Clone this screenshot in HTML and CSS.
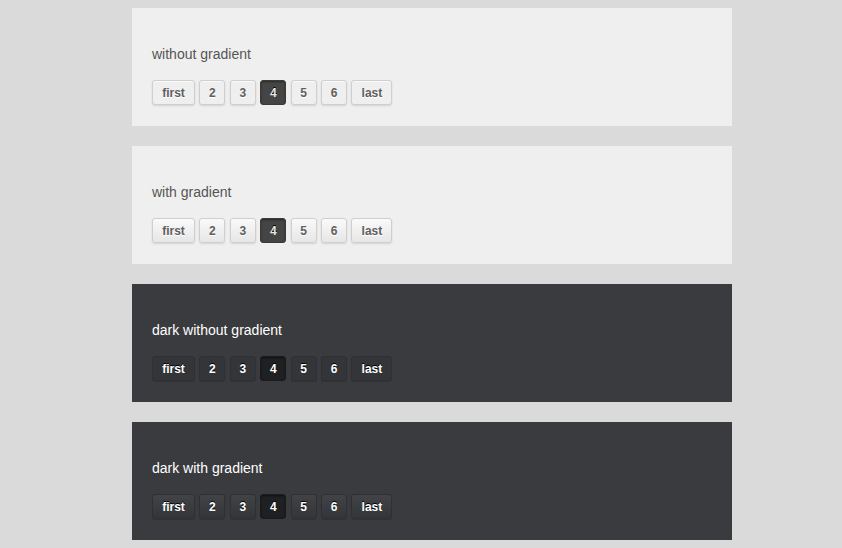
FILE: index.html
```html
<!DOCTYPE html>
<html>
<head>
<meta charset="utf-8">
<link rel="stylesheet" href="styles.css">
</head>
<body>
<div class="wrap">
  <section class="panel light">
    <h2 class="title">without gradient</h2>
    <div class="pager">
      <a class="btn">first</a><a class="btn num">2</a><a class="btn num">3</a><a class="btn num active">4</a><a class="btn num">5</a><a class="btn num">6</a><a class="btn">last</a>
    </div>
  </section>
  <section class="panel light grad">
    <h2 class="title">with gradient</h2>
    <div class="pager">
      <a class="btn">first</a><a class="btn num">2</a><a class="btn num">3</a><a class="btn num active">4</a><a class="btn num">5</a><a class="btn num">6</a><a class="btn">last</a>
    </div>
  </section>
  <section class="panel dark">
    <h2 class="title">dark without gradient</h2>
    <div class="pager">
      <a class="btn">first</a><a class="btn num">2</a><a class="btn num">3</a><a class="btn num active">4</a><a class="btn num">5</a><a class="btn num">6</a><a class="btn">last</a>
    </div>
  </section>
  <section class="panel dark grad">
    <h2 class="title">dark with gradient</h2>
    <div class="pager">
      <a class="btn">first</a><a class="btn num">2</a><a class="btn num">3</a><a class="btn num active">4</a><a class="btn num">5</a><a class="btn num">6</a><a class="btn">last</a>
    </div>
  </section>
</div>
</body>
</html>
```
FILE: styles.css
```css
html, body {
  margin: 0;
  padding: 0;
  background: #dadada;
  font-family: "Liberation Sans", Arial, sans-serif;
}
.wrap {
  width: 600px;
  margin: 8px 0 0 132px;
  display: flex;
  flex-direction: column;
  gap: 20px;
}
.panel {
  height: 118px;
  box-sizing: border-box;
  padding: 38px 20px 0;
}
.light { background: #efefef; }
.dark { background: #3a3b3e; }
.title {
  margin: 0 0 18px;
  font-size: 14px;
  line-height: 16px;
  font-weight: normal;
  color: #555;
}
.dark .title { color: #fff; }
.pager {
  display: flex;
  gap: 4.4px;
}
.btn {
  box-sizing: border-box;
  height: 25px;
  padding: 0 9.2px;
  display: flex;
  align-items: center;
  justify-content: center;
  font-size: 12px;
  font-weight: bold;
  border-radius: 3px;
  cursor: pointer;
}
.num { width: 26px; padding: 0; }
.light .btn {
  background: #efefef;
  border: 1px solid #cfcfcf;
  color: #606060;
  text-shadow: 0 1px 0 #fff;
  box-shadow: 0 1px 2px rgba(0,0,0,0.12), inset 0 1px 0 #fafafa;
}
.light.grad .btn {
  background: linear-gradient(#fafafa, #e6e6e6);
}
.light .btn.active {
  background: #454545;
  border-color: #3a3a3a;
  color: #e6e6e6;
  text-shadow: 0 -1px 0 #000;
  box-shadow: inset 0 1px 2px rgba(0,0,0,0.4);
}
.dark .btn {
  background: #333538;
  border: 1px solid #2f3033;
  color: #fff;
  text-shadow: 0 -1px 0 #000;
  box-shadow: 0 1px 1px rgba(0,0,0,0.15);
}
.dark.grad .btn {
  background: linear-gradient(#414346, #333538);
}
.dark .btn.active {
  background: #1f2022;
  border-color: #1a1b1c;
  box-shadow: inset 0 1px 2px rgba(0,0,0,0.5);
}
```
